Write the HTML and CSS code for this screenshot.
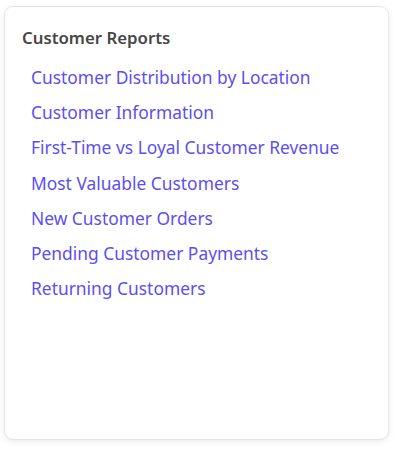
FILE: index.html
```html
<!DOCTYPE html>
<html>
<head>
  <title>Customer Reports</title>
  <link rel="stylesheet" href="styles.css">
</head>
<body>
  <div class="card">
    <h2 class="card-title">Customer Reports</h2>
    <ul class="report-list">
      <li><a href="#">Customer Distribution by Location</a></li>
      <li><a href="#">Customer Information</a></li>
      <li><a href="#">First-Time vs Loyal Customer Revenue</a></li>
      <li><a href="#">Most Valuable Customers</a></li>
      <li><a href="#">New Customer Orders</a></li>
      <li><a href="#">Pending Customer Payments</a></li>
      <li><a href="#">Returning Customers</a></li>
    </ul>
  </div>
</body>
</html>
```

FILE: styles.css
```css
* {
  margin: 0;
  padding: 0;
  box-sizing: border-box;
}

body {
  font-family: "Noto Sans", sans-serif;
  background: #ffffff;
  padding: 6px 7px 12px 4px;
}

.card {
  height: 434px;
  background: #ffffff;
  border: 1px solid #e6e6e6;
  border-radius: 9px;
  box-shadow: 0 2px 6px rgba(0, 0, 0, 0.08);
  padding: 20px 17px;
}

.card-title {
  font-size: 16.8px;
  font-weight: 600;
  color: #474747;
  line-height: 22px;
  margin-bottom: 11px;
}

.report-list {
  list-style: none;
  padding-left: 9px;
}

.report-list li {
  font-size: 17.4px;
  line-height: 35.2px;
}

.report-list a {
  color: #5b4ff0;
  text-decoration: none;
}
```
